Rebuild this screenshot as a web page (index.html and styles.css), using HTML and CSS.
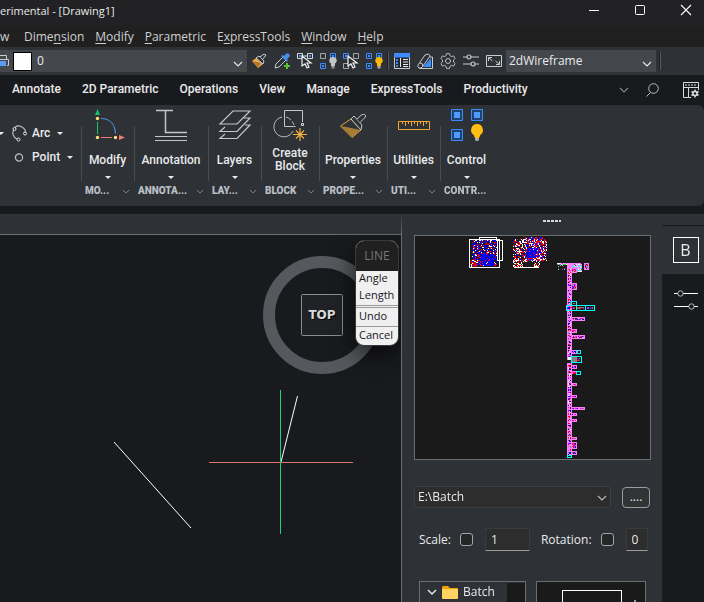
FILE: index.html
```html
<!DOCTYPE html>
<html lang="en">
<head>
<meta charset="utf-8">
<title>Experimental - [Drawing1]</title>
<link rel="stylesheet" href="styles.css">
</head>
<body>
<svg class="defs" aria-hidden="true">
  <symbol id="chev" viewBox="0 0 10 6"><path d="M1 1l4 4 4-4" fill="none" stroke="currentColor" stroke-width="1.1"/></symbol>
  <symbol id="caret" viewBox="0 0 6 3"><path d="M0 0h6L3 3z" fill="currentColor"/></symbol>
  <symbol id="node" viewBox="0 0 6 6"><path d="M.5.5h5v5h-5z" fill="none" stroke="currentColor"/><path d="M2 2h2v2H2z" fill="currentColor"/></symbol>
  <symbol id="pointer" viewBox="0 0 12 14"><path d="M1 1v10l3-2 2 4 2-1-2-4h4z" fill="#2e3136" stroke="#f0f1f2" stroke-width="1.200"/></symbol>
  <symbol id="sliders" viewBox="0 0 16 16"><path d="M0 4h4M8 4h8M0 11h8M12 11h4" stroke="currentColor" stroke-width="1.2"/><circle cx="6" cy="4" r="2" fill="none" stroke="currentColor" stroke-width="1.2"/><circle cx="10" cy="11" r="2" fill="none" stroke="currentColor" stroke-width="1.2"/></symbol>
  <symbol id="brush" viewBox="0 0 28 24"><path d="M1.500 12L12 5l10 11-9 7.500z" fill="#2e3136" stroke="#eda63c"/><path d="M2 12l20 4-9 7z" fill="#a87b36"/><path d="M12 5l3-3 8 9-1 5z" fill="#2e3136" stroke="#c3c7cb"/><path d="M18 5l5-4.500q4-1 3.500 2.500L21 8.500" fill="#2e3136" stroke="#c3c7cb"/></symbol>
</svg>

<header class="titlebar">
  <h1 class="title">erimental - [Drawing1]</h1>
  <div class="window-buttons">
    <button aria-label="Minimize"><svg width="10" height="10"><path d="M0 5.500h10" stroke="#fff"/></svg></button>
    <button aria-label="Maximize"><svg width="10" height="10"><rect x=".5" y=".5" width="9" height="9" rx="1" fill="none" stroke="#fff"/></svg></button>
    <button aria-label="Close"><svg width="10" height="10"><path d="M0 0l10 10M10 0L0 10" stroke="#fff" stroke-width="1.1"/></svg></button>
  </div>
</header>

<nav class="menubar">
  <a href="#">w</a><a href="#">Dime<u>n</u>sion</a><a href="#"><u>M</u>odify</a><a href="#"><u>P</u>arametric</a><a href="#">E<u>x</u>pressTools</a><a href="#"><u>W</u>indow</a><a href="#"><u>H</u>elp</a>
</nav>

<div class="toolbar">
  <label class="combo layer">
    <svg width="9" height="14" fill="none" stroke="#c9cccf"><path d="M0 1.500h6.500V5M0 5.500h8.500v6H7"/><path d="M0 7h6v5H0z" fill="#5b9df5" stroke="none"/></svg>
    <span class="swatch"></span>
    <select aria-label="Layer"><option>0</option></select>
    <svg class="combo-chev" width="10" height="6"><use href="#chev"/></svg>
  </label>
  <div class="tools">
    <button aria-label="Match properties"><svg width="16" height="16" viewBox="0 0 16 16"><path d="M1 8l4-3 7 6-5 4z" fill="#eda63c"/><path d="M1 8l9 2-3 4z" fill="#a97631"/><path d="M5 5l3-2 5 5-1 3z" fill="#2e3136" stroke="#c9cccf"/><path d="M9 4l4-3 2 1-3 4" fill="#2e3136" stroke="#c9cccf"/></svg></button>
    <button aria-label="Pick"><svg width="16" height="16" viewBox="0 0 16 16"><path d="M9 4l-7 7-1 4 4-1 7-7" fill="#2e3136" stroke="#c9cccf"/><path d="M7 3l6 6 1-2-1-1 3-3-1-2-2-1-3 3-1-1z" fill="#4a8ee8"/><path d="M13 10v6M10 13h6" stroke="#5fc02c" stroke-width="2"/></svg></button>
    <button aria-label="Select similar"><svg width="18" height="16" viewBox="0 0 18 16"><path d="M6 3h5" stroke="#d8dadc"/><use href="#node" width="6" height="6" color="#d8dadc"/><use href="#node" x="10" width="6" height="6" color="#d8dadc"/><path d="M2 2h2v2H2zM12 2h2v2h-2z" fill="#3b8cff"/><use href="#pointer" x="4" y="2" width="12" height="14"/></svg></button>
    <button aria-label="Hide objects"><svg width="18" height="16" viewBox="0 0 18 16"><path d="M.5.5h5v5h-5z" fill="none" stroke="#a3a6a9"/><use href="#node" x="10" width="6" height="6" color="#3b8cff"/><use href="#node" y="10" width="6" height="6" color="#3b8cff"/><path d="M13 4a3.500 3.500 0 0 0-2 6.500V13h4v-2.500A3.500 3.500 0 0 0 13 4z" fill="#c3c5c7"/><path d="M11.500 13h3v2.500h-3z" fill="#94979a"/></svg></button>
    <button aria-label="Isolate objects"><svg width="18" height="16" viewBox="0 0 18 16"><use href="#node" width="6" height="6" color="#3b8cff"/><path d="M10.500.5h5v5h-5zM.5 10.500h5v5h-5z" fill="none" stroke="#a3a6a9"/><use href="#pointer" x="4" y="2" width="12" height="14"/></svg></button>
    <button aria-label="Show objects"><svg width="18" height="16" viewBox="0 0 18 16"><use href="#node" width="6" height="6" color="#3b8cff"/><use href="#node" x="10" width="6" height="6" color="#3b8cff"/><use href="#node" y="10" width="6" height="6" color="#3b8cff"/><path d="M13 4a3.500 3.500 0 0 0-2 6.500V13h4v-2.500A3.500 3.500 0 0 0 13 4z" fill="#ffb60d"/><path d="M11.500 13h3v2.500h-3z" fill="#a9a9a4"/></svg></button>
  </div>
  <span class="bar-sep"></span>
  <div class="tools">
    <button aria-label="Properties panel"><svg width="16" height="16" viewBox="0 0 16 16"><path d="M.5.5h15v15H.5z" fill="#25272b" stroke="#c9cccf"/><path d="M0 0h16v4.500H0z" fill="#3b8cff"/><path d="M2 6h2v2H2zM2 9h2v2H2zM2 12h2v2H2z" fill="#3b8cff"/><path d="M6.500 5v9M9 6.500h5M9 9h5M9 11.500h5M9 13.500h5" stroke="#e4e6e8"/></svg></button>
    <button aria-label="Tool palettes"><svg width="17" height="16" viewBox="0 0 17 16"><path d="M13 4h2.500v11.500H2" fill="none" stroke="#c9cccf"/><path d="M14 5v9H6z" fill="#3b8cff"/><path d="M1 12L8 2q4-2 5 1L6 13q-2 3-4 2t-1-3zM6 13q0-3-3-3" fill="#2e3136" stroke="#c9cccf"/></svg></button>
    <button aria-label="Settings"><svg width="16" height="16" viewBox="0 0 16 16" fill="none" stroke="#b9bcc0"><path d="M6.500.6h3l.5 2.100 1.500.9 2.100-.7 1.500 2.600-1.600 1.500v2l1.600 1.500-1.500 2.600-2.100-.7-1.500.9-.5 2.100h-3L6 13.300l-1.500-.9-2.100.7-1.500-2.600L2.500 9V7L.9 5.500l1.500-2.600 2.100.7L6 2.700z"/><circle cx="8" cy="8" r="2.500"/></svg></button>
    <button aria-label="Options"><svg width="16" height="16" color="#c9cccf"><use href="#sliders"/></svg></button>
    <button aria-label="Full screen"><svg width="16" height="16" viewBox="0 0 16 16" fill="none" stroke="#c9cccf"><path d="M.5 2.500h15v11H.5zM2.500 8V4.500H6M2.500 4.500l4 3.500M13.500 8v3.500H10M13.500 11.500L9.500 8"/></svg></button>
  </div>
  <label class="combo visual">
    <select aria-label="Visual style"><option>2dWireframe</option></select>
    <svg class="combo-chev" width="10" height="6"><use href="#chev"/></svg>
  </label>
  <span class="bar-sep end"></span>
</div>

<nav class="tabs">
  <a href="#">Annotate</a><a href="#">2D Parametric</a><a href="#">Operations</a><a href="#">View</a><a href="#">Manage</a><a href="#">ExpressTools</a><a href="#">Productivity</a>
  <div class="tab-tools">
    <button aria-label="Collapse ribbon"><svg width="10" height="6"><use href="#chev"/></svg></button>
    <button aria-label="Search"><svg width="13" height="14" fill="none" stroke="#b9bcc0"><circle cx="7.500" cy="5.500" r="4.800"/><path d="M4.500 9.500L.5 13.500"/></svg></button>
    <button aria-label="Customize ribbon"><svg width="16" height="16" viewBox="0 0 16 16" fill="none" stroke="#d8dadc"><path d="M8 15.500H.5V.5h15V8M0 5.500h16M5.500 6v9"/><path d="M2 3h12" stroke-dasharray="2 1"/><path d="M12 7.500v8M8.500 9.500l7 4M8.500 13.500l7-4" stroke-width="1.600"/><circle cx="12" cy="11.500" r="2" fill="#191a1e" stroke-width="1.500"/></svg></button>
  </div>
</nav>

<section class="ribbon">
  <div class="group draw">
    <div class="row"><svg class="lead" width="6" height="3"><use href="#caret"/></svg><button class="small"><svg width="15" height="17" viewBox="0 0 15 17" fill="none" stroke="#e4e6e8"><path d="M2 4C3 1 6 0 9 1.500s5 4 4.500 7M1.500 5C0 9 1 12 5 14" stroke="#b9bcc0" stroke-width="1.200"/><circle cx="2.500" cy="4" r="1.500" fill="#2e3136"/><circle cx="13" cy="8.500" r="1.500" fill="#2e3136"/><circle cx="6.500" cy="14.500" r="1.500" fill="#2e3136"/></svg>Arc<svg width="6" height="3"><use href="#caret"/></svg></button></div>
    <div class="row second"><button class="small"><svg width="15" height="9"><circle cx="7" cy="4.500" r="3.600" fill="none" stroke="#b9bcc0" stroke-width="1.200"/></svg>Point<svg width="6" height="3"><use href="#caret"/></svg></button></div>
  </div>

  <div class="group w53">
    <button class="big"><svg width="32" height="34" viewBox="0 0 32 34" fill="none"><path d="M5.500 13v12" stroke="#13c56b"/><path d="M3 6l2.500-6L8 6z" fill="#13c56b"/><path d="M9 28.500h11" stroke="#f07a7a"/><path d="M27 26v5l6-2.500z" fill="#f07a7a"/><path d="M9 9.500c9 0 14 6 14.500 15" stroke="#4a90e2" stroke-width="1.200"/><g fill="#ffe27a"><circle cx="5.500" cy="9.500" r="1.700"/><circle cx="5.500" cy="28.500" r="1.700"/><circle cx="23.500" cy="28.500" r="1.700"/></g></svg><span>Modify</span><svg width="6" height="3"><use href="#caret"/></svg></button>
    <div class="caption"><span>MO...</span><svg width="8" height="5"><use href="#chev"/></svg></div>
  </div>
  <div class="group w74">
    <button class="big"><svg width="32" height="34" viewBox="0 0 32 34" fill="none" stroke="#c3c7cb"><path d="M0 27.500h32M0 31.500h32"/><path d="M1 1.500h17M10.500 1.500v22H32" stroke-width="1.500"/></svg><span>Annotation</span><svg width="6" height="3"><use href="#caret"/></svg></button>
    <div class="caption"><span>ANNOTA...</span><svg width="8" height="5"><use href="#chev"/></svg></div>
  </div>
  <div class="group w53">
    <button class="big"><svg width="32" height="34" viewBox="0 0 32 34" fill="none" stroke="#c3c7cb" stroke-width="1.200"><path d="M14 2h17L18 15H1zM6 18l-5 4.500h17L31 9h-6M6 25l-5 4.500h17L31 16h-5"/></svg><span>Layers</span><svg width="6" height="3"><use href="#caret"/></svg></button>
    <div class="caption"><span>LAY...</span><svg width="8" height="5"><use href="#chev"/></svg></div>
  </div>
  <div class="group w58">
    <button class="big two"><svg width="32" height="34" viewBox="0 0 32 34" fill="none"><path d="M8 8a10 10 0 1 0 11 14" stroke="#b9bcc0"/><path d="M12 8q5 1 8 8" stroke="#b9bcc0" stroke-dasharray="6 2"/><path d="M28.500 13V1.500h-18v16h11" stroke="#c3c7cb"/><path d="M27.500 14.500h2v2h-2z" stroke="#d8dadc"/><path d="M26 19v13M19 25.500h14M22 21.500l8 8M30 21.500l-8 8" stroke="#f5b042" stroke-width="1.200"/></svg><span>Create<br>Block</span></button>
    <div class="caption"><span>BLOCK</span><svg width="8" height="5"><use href="#chev"/></svg></div>
  </div>
  <div class="group w68">
    <button class="big"><svg width="28" height="34"><use href="#brush" y="5" width="28" height="24"/></svg><span>Properties</span><svg width="6" height="3"><use href="#caret"/></svg></button>
    <div class="caption"><span>PROPE...</span><svg width="8" height="5"><use href="#chev"/></svg></div>
  </div>
  <div class="group w53">
    <button class="big"><svg width="32" height="34" fill="none" stroke="#f0a92f"><path d="M.5 12.500h31v8H.5zM4.500 13v2M7.500 13v4M10.500 13v2M13.500 13v4M16.500 13v2M19.500 13v4M22.500 13v2M25.500 13v4M28.500 13v2"/></svg><span>Utilities</span><svg width="6" height="3"><use href="#caret"/></svg></button>
    <div class="caption"><span>UTI...</span><svg width="8" height="5"><use href="#chev"/></svg></div>
  </div>
  <div class="group w53">
    <button class="big"><svg width="32" height="34" viewBox="0 0 32 34"><g fill="#21416f" stroke="#3b8cff"><path d="M.5.5h11v11H.5zM20.500.5h11v11h-11zM.5 20.500h11v11H.5z"/></g><path d="M3 3h6v6H3zM23 3h6v6h-6zM3 23h6v6H3z" fill="#4d9bff"/><path d="M26 15a6 6 0 0 0-3.500 10.800L24 29h4l1.500-3.200A6 6 0 0 0 26 15z" fill="#ffbf12"/><path d="M24 29h4v2l-1 1h-2l-1-1z" fill="#a9a9a4"/></svg><span>Control</span><svg width="6" height="3"><use href="#caret"/></svg></button>
    <div class="caption"><span>CONTR...</span></div>
  </div>
</section>

<main class="workspace">
  <section class="viewport">
    <svg class="drawing" width="402" height="368" viewBox="0 234 402 368" fill="none">
      <circle cx="322" cy="315" r="53" stroke="#55585c" stroke-width="12"/>
      <rect x="301.500" y="294.500" width="41" height="41" rx="1" fill="#202226" stroke="#8b8d90"/>
      <path d="M114 442l77 86M281 462l16.500-66" stroke="#fff"/>
      <path d="M280.500 390v144" stroke="#12d67b"/>
      <path d="M209 462.500h144" stroke="#d9776c"/>
    </svg>
    <span class="cube-face">TOP</span>
    <div class="context" role="menu">
      <div class="context-title">LINE</div>
      <button role="menuitem">Angle</button>
      <button role="menuitem">Length</button>
      <button role="menuitem" class="ruled double">Undo</button>
      <button role="menuitem" class="ruled">Cancel</button>
    </div>
  </section>

  <aside class="panel">
    <div class="grip"></div>
    <canvas class="preview" id="preview" width="235" height="223"></canvas>
    <div class="path-row">
      <label class="path"><select aria-label="Folder"><option>E:\Batch</option></select><svg class="combo-chev" width="10" height="6"><use href="#chev"/></svg></label>
      <button class="browse" aria-label="Browse">....</button>
    </div>
    <div class="options">
      <label for="scale-on">Scale:</label><input type="checkbox" id="scale-on">
      <input class="num scale" type="text" value="1" aria-label="Scale value">
      <label for="rot-on">Rotation:</label><input type="checkbox" id="rot-on">
      <input class="num rotation" type="text" value="0" aria-label="Rotation value">
    </div>
    <div class="browser">
      <div class="tree">
        <button class="tree-item"><svg width="10" height="6" viewBox="0 0 10 6"><path d="M1 1l4 4 4-4" fill="none" stroke="#e4e6e8" stroke-width="1.500"/></svg><svg width="16" height="13"><path d="M0 1.500Q0 0 1.500 0H6l2 2h7q1 0 1 1v3H0z" fill="#f0a30a"/><rect y="3" width="16" height="10" rx="1" fill="#ffd45e"/></svg>Batch</button>
        <div class="tree-scroll"></div>
      </div>
      <div class="thumb"><div class="thumb-shape"></div><span class="thumb-tick"></span></div>
    </div>
  </aside>

  <nav class="rail">
    <button class="selected" aria-label="Blocks"><span>B</span></button>
    <button aria-label="Adjust"><svg width="24" height="20" fill="none" stroke="#fff"><path d="M0 3.500h4M9 3.500h15M0 16.500h15M20 16.500h4"/><circle cx="6.500" cy="3.500" r="2.700" stroke="#b9bcc0"/><circle cx="17.500" cy="16.500" r="2.700" stroke="#b9bcc0"/></svg></button>
  </nav>
</main>
<script src="preview.js"></script>
</body>
</html>
```
FILE: preview.js
```js
// Paints the thumbnail of the batch drawing: two dense sheets and a tall index tree.
const ctx = document.getElementById('preview').getContext('2d');
let seed = 41;
const rand = () => (seed = (seed * 16807) % 2147483647) / 2147483647;
const pick = list => list[Math.floor(rand() * list.length)];
const box = (c, x, y, w, h) => { ctx.fillStyle = c; ctx.fillRect(x, y, w, h); };

function frame(c, x, y, w, h) {
  box(c, x, y, w, 1);
  box(c, x, y + h - 1, w, 1);
  box(c, x, y, 1, h);
  box(c, x + w - 1, y, 1, h);
}

function noise(x, y, w, h, colors) {
  for (let j = y; j < y + h; j++) {
    for (let i = x; i < x + w; i++) {
      const c = pick(colors);
      if (c) box(c, i, j, 1, 1);
    }
  }
}

const B = '#0000ff', R = '#ff0000', W = '#ffffff', M = '#ff00ff', P = '#ff7fff', C = '#00ffff', G = '#808080';

frame(W, 54, 3, 31, 29);
frame(W, 64, 1, 18, 4);
frame(W, 82, 4, 6, 21);
noise(57, 4, 25, 26, [B, B, B, R, R, null, null, W, null]);
noise(66, 18, 13, 12, [B, B, B, null]);
noise(55, 24, 6, 7, [R, R, W, null, null]);
noise(98, 3, 34, 22, [R, R, W, W, null, null, null, B]);
noise(98, 24, 27, 7, [R, W, W, null, null]);
noise(110, 1, 18, 24, [B, B, R, R, null, null, W]);
noise(112, 12, 10, 10, [B, B, B, null]);
box('#1a1a1a', 108, 26, 11, 5);
box(W, 99, 31, 25, 1);

noise(142, 27, 12, 2, [P, '#00ff00', M, W]);
noise(141, 29, 10, 6, [C, R, M, ...Array(14).fill(null)]);
box(P, 154, 27, 12, 5);
noise(155, 28, 12, 8, [P, P, W, C, R]);

box(P, 152, 27, 5, 193);
noise(153, 33, 3, 186, [P, M, B, R, G, '#1a1a1a', W, P]);
for (let y = 35; y < 218; y += 3) box(P, 152, y, 5, 1);
box(W, 153, 121, 3, 3);
box('#1a1a1a', 152, 124, 5, 3);

[[156, 32, 6, 5], [156, 47, 6, 7], [156, 81, 14, 4], [156, 93, 6, 4], [156, 99, 14, 4],
 [156, 114, 6, 4], [156, 129, 6, 4], [156, 147, 6, 3], [156, 159, 6, 3], [156, 171, 14, 3],
 [156, 177, 6, 3], [156, 183, 6, 3], [156, 201, 6, 3], [156, 206, 6, 7], [156, 215, 6, 4],
 [169, 27, 5, 7]].forEach(([x, y, w, h]) => {
  frame(P, x, y, w, h);
  noise(x + 1, y + 1, w - 2, h - 2, [M, R, G, B, P]);
});

[[156, 65, 6, 5], [151, 69, 11, 6], [161, 69, 10, 6], [170, 69, 10, 6], [162, 114, 4, 4],
 [156, 120, 11, 7], [161, 135, 5, 4], [152, 219, 5, 3]].forEach(([x, y, w, h]) => {
  frame(C, x, y, w, h);
  noise(x + 1, y + 2, w - 3, h - 4, [G, G, R, B, null]);
});
noise(157, 136, 4, 2, [P, M, R]);
box(P, 156, 135, 5, 1);
box(G, 157, 121, 5, 5);
```
FILE: styles.css
```css
:root {
  --bar: #2e3136;
  --dark: #191a1e;
  --field: #44474c;
  --text: #e9eaeb;
  --ui: "Open Sans", "Noto Sans", sans-serif;
  --ribbon: Roboto, sans-serif;
}
* { box-sizing: border-box; }
body {
  margin: 0;
  height: 100vh;
  display: flex;
  flex-direction: column;
  overflow: hidden;
  background: var(--dark);
  color: var(--text);
  font: 12px/16px var(--ui);
}
button, select, input { font: inherit; color: inherit; border: 0; padding: 0; margin: 0; background: none; appearance: none; border-radius: 0; }
a { color: inherit; text-decoration: none; }
svg { display: block; flex: none; overflow: visible; }
.defs { position: absolute; width: 0; height: 0; }

.titlebar { display: flex; justify-content: space-between; height: 26px; flex: none; background: #222123; }
.title { margin: 0; font-size: 11px; font-weight: 400; line-height: 22px; }
.window-buttons { display: flex; height: 20px; margin-right: -5px; }
.window-buttons button { width: 46px; display: flex; align-items: center; justify-content: center; }

.menubar { display: flex; gap: 11px; height: 21px; flex: none; background: #202020; line-height: 22px; color: #cfd0d1; }
.menubar a:first-child { width: 13px; }
.menubar u { text-underline-offset: 2px; }

.toolbar { display: flex; align-items: center; height: 28px; flex: none; background: var(--bar); }
.combo { position: relative; display: flex; align-items: center; height: 22px; background: var(--field); }
.combo select { flex: 1; min-width: 0; height: 22px; }
.combo-chev { position: absolute; right: 4px; top: 11px; pointer-events: none; }
.layer { width: 247px; margin-right: 4px; }
.swatch { width: 19px; height: 19px; margin: 0 5px 0 4px; background: #fff; border: 1px solid #000; }
.visual { width: 150px; margin-left: 4px; padding-left: 3px; }
.tools { display: flex; gap: 7px; }
.tools button { width: 16px; height: 16px; }
.bar-sep { width: 2px; height: 18px; margin: 0 5px; background: #1f2124; border-right: 1px solid #55585c; }
.bar-sep.end { margin: 0 3px; }

.tabs { display: flex; gap: 21px; height: 30px; flex: none; padding-left: 12px; line-height: 28px; font-family: var(--ribbon); font-size: 12px; font-weight: 500; }
.tab-tools { display: flex; align-items: center; gap: 17px; height: 29px; margin-left: auto; padding-right: 5px; color: #85888c; }
.tab-tools button:last-child { margin-left: 7px; }

.ribbon { display: flex; height: 101px; flex: none; background: var(--bar); border-radius: 0 6px 6px 0; font-family: var(--ribbon); font-size: 12px; font-weight: 500; line-height: 13px; }
.group { position: relative; display: flex; flex-direction: column; flex: none; }
.group + .group::before { content: ""; position: absolute; left: 0; top: 21px; height: 55px; width: 1px; background: #484b50; }
.draw { width: 81px; padding-top: 19px; }
.w53 { width: 53px; }
.w58 { width: 58px; }
.w68 { width: 68px; }
.w74 { width: 74px; }
.row { display: flex; align-items: center; height: 18px; }
.row.second { margin-top: 6px; padding-left: 12px; }
.lead { margin-left: -2px; margin-right: 8px; }
.small { display: flex; align-items: center; gap: 5px; }
.small svg:last-child { margin-left: 2px; }
.big { display: flex; flex-direction: column; align-items: center; height: 79px; padding-top: 4px; line-height: 13px; white-space: nowrap; }
.big span { margin: 11px 0 9px; }
.big.two span { margin-top: 4px; }
.caption { display: flex; align-items: center; justify-content: space-between; padding: 0 4px; font-size: 10px; font-weight: 900; line-height: 14px; color: #b9bfc6; }
.caption svg { color: #8d9196; }

.workspace { display: flex; flex: 1; min-height: 0; margin-top: 8px; }
.viewport { position: relative; flex: 1; min-width: 0; background: var(--dark); border-top: 20px solid var(--bar); border-right: 1px solid #6b6d70; overflow: hidden; }
.viewport::before { content: ""; position: absolute; top: 0; left: 0; right: 0; height: 1px; background: #6b6d70; }
.drawing { position: absolute; left: 0; top: 0; }
.cube-face { position: absolute; left: 302px; top: 73px; width: 40px; text-align: center; font: 700 12px/16px "DejaVu Sans", sans-serif; color: #d8dadc; text-shadow: 1px 1px 1px #000; }
.context { position: absolute; left: 355px; top: 6px; width: 44px; height: 106px; background: #f0f0f0; border: 1px solid #38393b; border-radius: 9px; overflow: hidden; color: #16161c; box-shadow: 0 8px 24px #000a; font-size: 11px; }
.context-title { height: 30px; background: #202020; color: #777; text-align: center; font-size: 12px; line-height: 30px; }
.context button { display: block; width: 100%; height: 17px; padding-left: 3px; text-align: left; line-height: 12px; padding-bottom: 3px; }
.context .ruled { height: 19px; border-top: 1px solid #9a9a9a; }
.context .double { height: 21px; border-top: 3px double #9a9a9a; }

.panel { flex: none; width: 260px; padding: 0 12px; background: var(--bar); display: flex; flex-direction: column; }
.grip { height: 2px; width: 18px; margin: 6px 0 13px 129px; background: repeating-linear-gradient(90deg, #d8dadc 0 3px, #2e3136 3px 4px); }
.preview { flex: none; align-self: flex-start; border: 1px solid #6b6d70; background: #1a1a1a; image-rendering: pixelated; }
.path-row { display: flex; justify-content: space-between; align-items: center; margin-top: 26px; }
.path { position: relative; display: block; width: 197px; }
.path select { width: 100%; height: 22px; padding-left: 3px; background: #2d2d2d; border: 1px solid #3c3e41; border-radius: 2px; }
.path .combo-chev { top: 9px; color: #b9bcc0; }
.browse { width: 28px; height: 21px; border: 1px solid #9a9c9e; border-radius: 4px; background: #323335; line-height: 16px; }
.options { display: flex; align-items: center; margin-top: 20px; padding-left: 5px; }
.options input[type="checkbox"] { width: 13px; height: 13px; margin: 0 12px 0 9px; background: #252628; border: 1px solid #a3a5a7; border-radius: 3px; }
.num { height: 23px; padding: 0 5px; background: #2d2d2d; border: 1px solid #393b3e; border-bottom: 1px solid #9a9c9e; }
.scale { width: 45px; margin-right: 11px; }
.rotation { width: 22px; }
.browser { display: flex; gap: 10px; flex: 1; min-height: 0; margin-top: 30px; padding: 0 4px 0 5px; }
.tree { display: flex; flex: 1; border: 1px solid #6b6d70; border-bottom: 0; }
.tree-item { display: flex; flex: 1; align-items: center; gap: 5px; height: 20px; padding-left: 7px; }
.tree-scroll { width: 18px; background: #1a1a1a; margin-top: 1px; }
.thumb { position: relative; width: 110px; border: 1px solid #6b6d70; border-bottom: 0; background: #1a1a1a; padding: 8px 23px 0 25px; }
.thumb-shape { height: 100%; border: 1px solid #fff; border-bottom: 0; }
.thumb-tick { position: absolute; right: 9px; bottom: 0; width: 2px; height: 2px; background: #9a9c9e; }

.rail { width: 42px; flex: none; background: var(--dark); border-top: 11px solid var(--bar); padding-top: 1px; }
.rail button { display: flex; align-items: center; justify-content: center; width: 100%; height: 48px; padding-left: 5px; }
.rail button:last-child { height: 52px; }
.rail .selected { background: var(--bar); }
.rail span { width: 26px; height: 26px; border: 1px solid #fff; font-size: 16px; line-height: 24px; }
```
